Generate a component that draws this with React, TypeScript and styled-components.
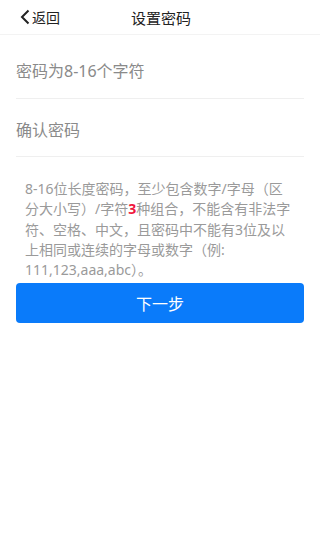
import React from "react";
import styled, { createGlobalStyle } from "styled-components";

const Global = createGlobalStyle`
  html, body { margin: 0; padding: 0; background: #fff; }
  body { font-family: "Noto Sans", "Noto Sans CJK SC", sans-serif; }
  * { box-sizing: border-box; }
`;

const Page = styled.div`
  width: 320px;
  min-height: 548px;
  background: #fff;
  display: flex;
  flex-direction: column;
`;

const Header = styled.header`
  height: 35px;
  display: grid;
  grid-template-columns: 1fr auto 1fr;
  align-items: center;
  border-bottom: 1px solid #f3f3f3;
`;

const Back = styled.div`
  display: flex;
  align-items: center;
  padding-left: 19px;
  font-size: 14px;
  color: #222;
  gap: 1px;
`;

const Title = styled.div`
  font-size: 15px;
  color: #222;
  padding-left: 2px;
`;

const Form = styled.div`
  display: flex;
  flex-direction: column;
  padding: 0 16px;
`;

const Field = styled.div`
  height: 58px;
  display: flex;
  align-items: center;
  border-bottom: 1px solid #efefef;
  font-size: 16px;
  color: #8a8a8a;
  padding-top: 2px;
  &:first-child { height: 64px; padding-top: 7px; }
`;

const Hint = styled.p`
  margin: 22px 25px 0 25px;
  font-size: 14px;
  line-height: 20.3px;
  color: #9a9a9a;
`;

const Em = styled.span`
  color: #f0143c;
  font-weight: bold;
`;

const Button = styled.button`
  margin: 3px 16px 0;
  height: 40px;
  border: none;
  border-radius: 4px;
  background: #0a7bfa;
  color: #fff;
  font-family: inherit;
  font-size: 16px;
`;

export default function App() {
  return (
    <>
      <Global />
      <Page>
        <Header>
          <Back>
            <svg width="12" height="16" viewBox="0 0 12 16">
              <path d="M9.5 1.5 L3 8 L9.5 14.5" fill="none" stroke="#222" strokeWidth="2" />
            </svg>
            返回
          </Back>
          <Title>设置密码</Title>
          <div />
        </Header>
        <Form>
          <Field>密码为8-16个字符</Field>
          <Field>确认密码</Field>
        </Form>
        <Hint>
          8-16位长度密码，至少包含数字/字母（区分大小写）/字符<Em>3</Em>种组合，不能含有非法字符、空格、中文，且密码中不能有3位及以上相同或连续的字母或数字（例:<wbr />111,123,aaa,abc）。
        </Hint>
        <Button>下一步</Button>
      </Page>
    </>
  );
}
